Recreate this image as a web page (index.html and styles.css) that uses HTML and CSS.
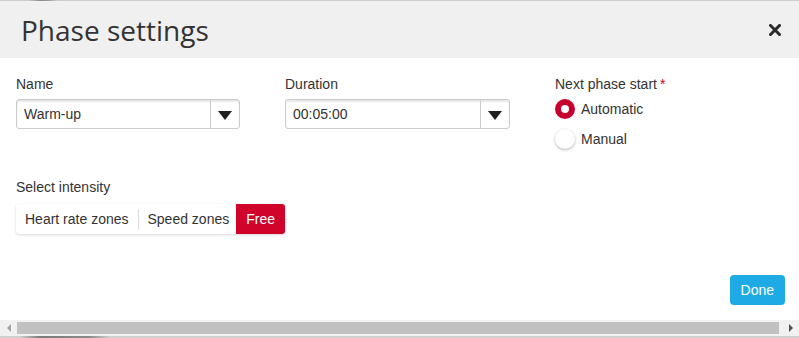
FILE: index.html
```html
<!DOCTYPE html>
<html>
<head>
	<meta charset="utf-8">
	<title>Phase settings</title>
	<link rel="stylesheet" href="styles.css">
</head>
<body>
	<div class="dialog">
		<div class="edge"></div>

		<div class="header">
			<h1 class="title">Phase settings</h1>
			<svg class="close" width="12" height="12" viewBox="0 0 12 12">
				<path d="M1.5 1.5 L10.5 10.5 M10.5 1.5 L1.5 10.5" stroke="#2b2b2b" stroke-width="3" stroke-linecap="square"/>
			</svg>
		</div>

		<div class="content">
			<div class="fields">
				<div class="field">
					<label class="label">Name</label>
					<div class="select">
						<span class="select-value">Warm-up</span>
						<span class="select-arrow"><i class="caret"></i></span>
					</div>
				</div>

				<div class="field">
					<label class="label">Duration</label>
					<div class="select">
						<span class="select-value">00:05:00</span>
						<span class="select-arrow"><i class="caret"></i></span>
					</div>
				</div>

				<div class="field">
					<label class="label">Next phase start<span class="required">*</span></label>
					<div class="radio-option">
						<span class="radio checked"></span>
						<span>Automatic</span>
					</div>
					<div class="radio-option">
						<span class="radio"></span>
						<span>Manual</span>
					</div>
				</div>
			</div>

			<div class="intensity">
				<label class="label intensity-label">Select intensity</label>
				<div class="segments">
					<span class="segment">Heart rate zones</span>
					<span class="segment-sep"></span>
					<span class="segment">Speed zones</span>
					<span class="segment active">Free</span>
				</div>
			</div>

			<div class="footer">
				<button class="btn-done">Done</button>
			</div>
		</div>

		<div class="scrollbar">
			<span class="scroll-btn"><i class="arrow-left"></i></span>
			<span class="scroll-track"><span class="scroll-thumb"></span></span>
			<span class="scroll-btn"><i class="arrow-right"></i></span>
		</div>

		<div class="edge edge-bottom"></div>
	</div>
</body>
</html>
```

FILE: styles.css
```css
* {
	box-sizing: border-box;
}

html, body {
	margin: 0;
	height: 100%;
}

body {
	background-color: #fff;
	color: #333;
	font-family: 'Liberation Sans', Arial, sans-serif;
	font-size: 14px;
}

.dialog {
	display: flex;
	flex-direction: column;
	height: 338px;
	overflow: hidden;
}

.edge {
	height: 1px;
	flex: none;
	background: linear-gradient(to right, #cdcdcd 28px, #8a8a8a 40px, #9a9a9a 48px, #cdcdcd 58px);
}

.edge-bottom {
	height: 2px;
	background: linear-gradient(to right, #cfcfcf 20px, #7a7a7a 40px, #8c8c8c 90px, #cfcfcf 110px);
}

.header {
	display: flex;
	align-items: center;
	justify-content: space-between;
	height: 57px;
	flex: none;
	padding: 0 18px 0 21px;
	background-color: #f0f0f0;
}

.title {
	margin: 0;
	font-family: 'Open Sans', sans-serif;
	font-size: 28px;
	font-weight: 400;
	color: #333;
}

.close {
	display: block;
	margin-top: 1px;
}

.content {
	flex: 1;
	padding: 18px 14px 0 16px;
}

.fields {
	display: grid;
	grid-template-columns: 224px 225px 1fr;
	column-gap: 45px;
}

.label {
	display: block;
	line-height: 16px;
	margin-bottom: 7px;
}

.required {
	color: #d0021b;
	margin-left: 3px;
}

.select {
	display: flex;
	height: 30px;
	border: 1px solid #cbcbcb;
	border-radius: 3px;
	box-shadow: inset 0 2px 2px rgba(0, 0, 0, 0.1);
}

.select-value {
	flex: 1;
	padding-left: 7px;
	line-height: 28px;
}

.select-arrow {
	display: flex;
	align-items: center;
	justify-content: center;
	width: 29px;
	border-left: 1px solid #cbcbcb;
}

.caret {
	width: 0;
	height: 0;
	margin-top: 2px;
	border-left: 7px solid transparent;
	border-right: 7px solid transparent;
	border-top: 9px solid #1e1e1e;
}

.radio-option {
	display: flex;
	align-items: center;
	gap: 6px;
	height: 20px;
	margin-bottom: 10px;
}

.radio {
	width: 20px;
	height: 20px;
	border-radius: 50%;
	background-color: #fff;
	box-shadow: 0 1px 3px rgba(0, 0, 0, 0.3);
}

.radio.checked {
	border: 6px solid #c8002d;
	box-shadow: none;
}

.intensity {
	margin-top: 20px;
}

.intensity-label {
	margin-bottom: 9px;
}

.segments {
	display: inline-flex;
	align-items: center;
	height: 30px;
	border-radius: 3px;
	background-color: #fff;
	box-shadow: 0 1px 3px rgba(0, 0, 0, 0.16);
}

.segment {
	padding: 0 9px;
	line-height: 30px;
}

.segment-sep {
	width: 1px;
	height: 21px;
	background-color: #dcdcdc;
}

.segment.active {
	padding: 0 10px;
	margin-left: -2px;
	border-radius: 0 3px 3px 0;
	background-color: #d0032b;
	color: #fff;
}

.footer {
	display: flex;
	justify-content: flex-end;
	margin-top: 41px;
}

.btn-done {
	height: 30px;
	padding: 0 11px;
	border: none;
	border-radius: 4px;
	background-color: #1eabe5;
	color: #fff;
	font-family: inherit;
	font-size: 14px;
}

.scrollbar {
	display: flex;
	height: 16px;
	flex: none;
	background-color: #f1f1f1;
}

.scroll-btn {
	display: flex;
	align-items: center;
	justify-content: center;
	width: 17px;
}

.arrow-left {
	border-top: 4px solid transparent;
	border-bottom: 4px solid transparent;
	border-right: 4px solid #a3a3a3;
}

.arrow-right {
	border-top: 4px solid transparent;
	border-bottom: 4px solid transparent;
	border-left: 4px solid #505050;
}

.scroll-track {
	flex: 1;
	display: flex;
	align-items: center;
}

.scroll-thumb {
	flex: 1;
	height: 12px;
	margin-right: 3px;
	background-color: #c1c1c1;
}
```
